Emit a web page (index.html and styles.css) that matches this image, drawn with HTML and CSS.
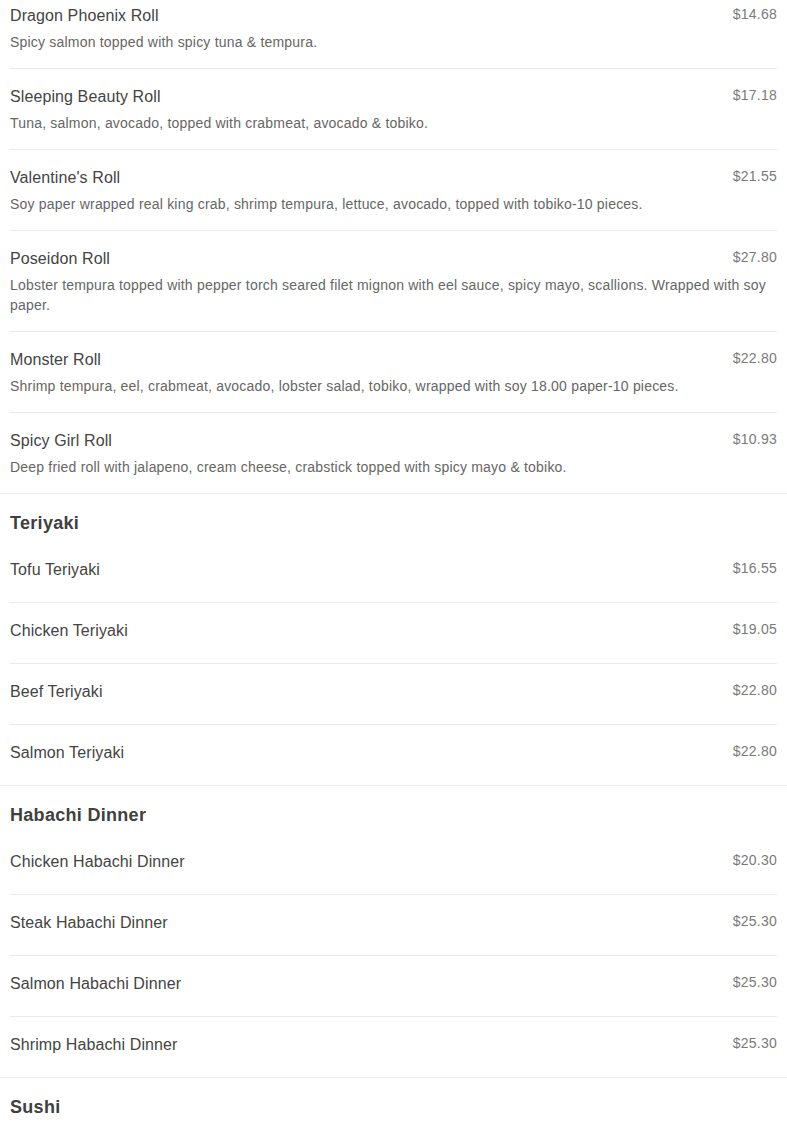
FILE: index.html
```html
<!DOCTYPE html>
<html lang="en">
<head>
<meta charset="utf-8">
<title>Menu</title>
<link rel="stylesheet" href="styles.css">
</head>
<body>
<main class="menu">
  <section class="section section-first">
    <div class="item">
      <div class="item-head"><span class="item-name">Dragon Phoenix Roll</span><span class="item-price">$14.68</span></div>
      <p class="item-desc">Spicy salmon topped with spicy tuna &amp; tempura.</p>
    </div>
    <div class="item">
      <div class="item-head"><span class="item-name">Sleeping Beauty Roll</span><span class="item-price">$17.18</span></div>
      <p class="item-desc">Tuna, salmon, avocado, topped with crabmeat, avocado &amp; tobiko.</p>
    </div>
    <div class="item">
      <div class="item-head"><span class="item-name">Valentine's Roll</span><span class="item-price">$21.55</span></div>
      <p class="item-desc">Soy paper wrapped real king crab, shrimp tempura, lettuce, avocado, topped with tobiko-10 pieces.</p>
    </div>
    <div class="item">
      <div class="item-head"><span class="item-name">Poseidon Roll</span><span class="item-price">$27.80</span></div>
      <p class="item-desc">Lobster tempura topped with pepper torch seared filet mignon with eel sauce, spicy mayo, scallions. Wrapped with soy paper.</p>
    </div>
    <div class="item">
      <div class="item-head"><span class="item-name">Monster Roll</span><span class="item-price">$22.80</span></div>
      <p class="item-desc">Shrimp tempura, eel, crabmeat, avocado, lobster salad, tobiko, wrapped with soy 18.00 paper-10 pieces.</p>
    </div>
    <div class="item">
      <div class="item-head"><span class="item-name">Spicy Girl Roll</span><span class="item-price">$10.93</span></div>
      <p class="item-desc">Deep fried roll with jalapeno, cream cheese, crabstick topped with spicy mayo &amp; tobiko.</p>
    </div>
  </section>
  <section class="section">
    <h2 class="section-title">Teriyaki</h2>
    <div class="item">
      <div class="item-head"><span class="item-name">Tofu Teriyaki</span><span class="item-price">$16.55</span></div>
    </div>
    <div class="item">
      <div class="item-head"><span class="item-name">Chicken Teriyaki</span><span class="item-price">$19.05</span></div>
    </div>
    <div class="item">
      <div class="item-head"><span class="item-name">Beef Teriyaki</span><span class="item-price">$22.80</span></div>
    </div>
    <div class="item">
      <div class="item-head"><span class="item-name">Salmon Teriyaki</span><span class="item-price">$22.80</span></div>
    </div>
  </section>
  <section class="section">
    <h2 class="section-title">Habachi Dinner</h2>
    <div class="item">
      <div class="item-head"><span class="item-name">Chicken Habachi Dinner</span><span class="item-price">$20.30</span></div>
    </div>
    <div class="item">
      <div class="item-head"><span class="item-name">Steak Habachi Dinner</span><span class="item-price">$25.30</span></div>
    </div>
    <div class="item">
      <div class="item-head"><span class="item-name">Salmon Habachi Dinner</span><span class="item-price">$25.30</span></div>
    </div>
    <div class="item">
      <div class="item-head"><span class="item-name">Shrimp Habachi Dinner</span><span class="item-price">$25.30</span></div>
    </div>
  </section>
  <section class="section section-last">
    <h2 class="section-title">Sushi</h2>
  </section>
</main>
</body>
</html>
```

FILE: styles.css
```css
* {
  box-sizing: border-box;
}

html, body {
  margin: 0;
  padding: 0;
  background: #ffffff;
}

body {
  font-family: "Liberation Sans", Arial, sans-serif;
  color: #444444;
}

.menu {
  margin-top: -12px;
}

.section {
  padding: 0 10px;
  border-bottom: 1px solid #ebebeb;
}

.section-last {
  border-bottom: none;
}

.section-title {
  margin: 0;
  padding: 16px 0 6px;
  font-size: 18px;
  line-height: 26px;
  font-weight: bold;
  letter-spacing: 0.3px;
  color: #404040;
}

.item {
  padding: 16px 0;
  border-bottom: 1px solid #ebebeb;
}

.item:last-child {
  border-bottom: none;
}

.item-head {
  display: flex;
  justify-content: space-between;
  align-items: flex-start;
  margin-bottom: 4px;
}

.item-name {
  font-size: 16px;
  line-height: 24px;
  letter-spacing: 0.1px;
  color: #444444;
}

.item-price {
  font-size: 14px;
  line-height: 20px;
  letter-spacing: 0.25px;
  color: #7a7a7a;
}

.item-desc {
  margin: 0;
  font-size: 14px;
  line-height: 20px;
  letter-spacing: 0.2px;
  color: #666666;
}
```
